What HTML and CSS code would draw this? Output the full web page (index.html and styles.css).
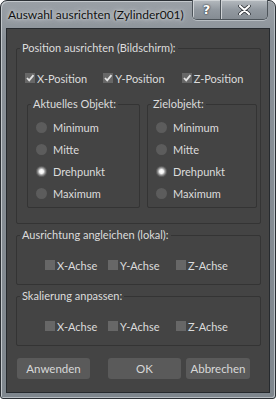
FILE: index.html
```html
<!DOCTYPE html>
<html lang="de">
<head>
    <meta charset="UTF-8">
    <title>Auswahl ausrichten</title>
    <link rel="stylesheet" href="styles.css">
</head>
<body>

    <div class="window">
        <!-- Title bar -->
        <div class="titlebar">
            <span class="title">Auswahl ausrichten (Zylinder001)</span>
            <div class="caption-buttons">
                <span class="cap-btn help">?</span>
                <span class="cap-btn close">
                    <svg width="13" height="10" viewBox="0 0 13 10"><path d="M2 1 L11 9 M11 1 L2 9" stroke="#2a2e33" stroke-width="3.6" stroke-linecap="round"/><path d="M2 1 L11 9 M11 1 L2 9" stroke="#ffffff" stroke-width="2.2" stroke-linecap="round"/></svg>
                </span>
            </div>
        </div>

        <div class="client">
            <fieldset class="group group-main">
                <legend>Position ausrichten (Bildschirm):</legend>
                <div class="check-row pos-row">
                    <label class="check"><span class="box checked"></span>X-Position</label>
                    <label class="check"><span class="box checked"></span>Y-Position</label>
                    <label class="check"><span class="box checked"></span>Z-Position</label>
                </div>
                <div class="sub-groups">
                    <fieldset class="group sub sub-left">
                        <legend>Aktuelles Objekt:</legend>
                        <div class="radio-list">
                            <div class="radio"><span class="dot"></span>Minimum</div>
                            <div class="radio"><span class="dot"></span>Mitte</div>
                            <div class="radio"><span class="dot on"></span>Drehpunkt</div>
                            <div class="radio"><span class="dot"></span>Maximum</div>
                        </div>
                    </fieldset>
                    <fieldset class="group sub sub-right">
                        <legend>Zielobjekt:</legend>
                        <div class="radio-list">
                            <div class="radio"><span class="dot"></span>Minimum</div>
                            <div class="radio"><span class="dot"></span>Mitte</div>
                            <div class="radio"><span class="dot on"></span>Drehpunkt</div>
                            <div class="radio"><span class="dot"></span>Maximum</div>
                        </div>
                    </fieldset>
                </div>
            </fieldset>

            <fieldset class="group group-axis">
                <legend>Ausrichtung angleichen (lokal):</legend>
                <div class="check-row axis-row">
                    <label class="check"><span class="box"></span>X-Achse</label>
                    <label class="check"><span class="box"></span>Y-Achse</label>
                    <label class="check"><span class="box"></span>Z-Achse</label>
                </div>
            </fieldset>

            <fieldset class="group group-axis">
                <legend>Skalierung anpassen:</legend>
                <div class="check-row axis-row">
                    <label class="check"><span class="box"></span>X-Achse</label>
                    <label class="check"><span class="box"></span>Y-Achse</label>
                    <label class="check"><span class="box"></span>Z-Achse</label>
                </div>
            </fieldset>

            <div class="buttons">
                <button class="btn btn-apply">Anwenden</button>
                <button class="btn btn-ok">OK</button>
                <button class="btn btn-cancel">Abbrechen</button>
            </div>
        </div>
    </div>

</body>
</html>
```

FILE: styles.css
```css
body {
    margin: 0;
    background: #ffffff;
    font-family: 'Lato', 'Open Sans', sans-serif;
}

/* Window frame */
.window {
    width: 276px;
    height: 399px;
    box-sizing: border-box;
    border: 1px solid #2b3035;
    border-radius: 7px 7px 3px 3px;
    padding: 0 5px 5px 5px;
    background: linear-gradient(#9aa0a6, #8a9198 40px, #7f878e);
    box-shadow: inset 1px 1px 0 #c3c8cc, inset -1px -1px 0 #b8bec3;
}

.titlebar {
    height: 27px;
    display: flex;
    align-items: flex-start;
}

.title {
    margin: 6px 0 0 2px;
    font-size: 12px;
    line-height: 16px;
    white-space: nowrap;
    color: #111;
    text-shadow: 0 0 6px #d6dadd, 0 0 3px #d6dadd;
}

.caption-buttons {
    margin-left: auto;
    margin-right: 2px;
    margin-top: -1px;
    display: flex;
    height: 19px;
    border: 1px solid #4d545a;
    border-top: none;
    border-radius: 0 0 5px 5px;
    overflow: hidden;
    box-shadow: 0 1px 0 #b8bec3;
}

.cap-btn {
    height: 19px;
    display: flex;
    align-items: center;
    justify-content: center;
    background: linear-gradient(#b5babf, #9299a0 50%, #858c93);
    box-shadow: inset 1px 1px 0 #cfd3d6;
    color: #fff;
    font-family: 'DejaVu Sans', sans-serif;
    font-weight: bold;
    font-size: 13px;
    text-shadow: 0 0 2px #2a2e33, 0 0 1px #2a2e33;
}

.help {
    width: 27px;
    border-right: 1px solid #4d545a;
}

.close {
    width: 46px;
}

/* Client area */
.client {
    height: 363px;
    border: 1px solid #262a2e;
    background: #444444;
    color: #dcdcdc;
    font-size: 11px;
    overflow: hidden;
}

.group {
    margin: 0;
    padding: 0;
    border: 1px solid #343434;
    border-radius: 2px;
    min-width: 0;
}

.group legend {
    margin-left: 3px;
    padding: 0 2px;
    line-height: 14px;
}

.group-main {
    width: 245px;
    box-sizing: border-box;
    margin: 12px 0 0 9px;
    padding: 16px 0 15px 0;
}

.check-row {
    display: flex;
    height: 14px;
    align-items: center;
}

.check {
    display: flex;
    align-items: center;
    white-space: nowrap;
}

.pos-row {
    margin-left: 8px;
}

.pos-row .check {
    width: 79px;
}

.box {
    width: 10px;
    height: 10px;
    margin-right: 2px;
    background: #676767;
}

.box.checked {
    background: #676767 url("data:image/svg+xml;utf8,<svg xmlns='http://www.w3.org/2000/svg' width='10' height='10'><path d='M2 5 L4.2 7.3 L8.5 2.2' fill='none' stroke='%23e4e4e4' stroke-width='1.8'/></svg>") no-repeat;
}

.sub-groups {
    display: flex;
    gap: 7px;
    margin: 12px 0 0 10px;
}

.sub {
    box-sizing: border-box;
    padding: 5px 0 3px 0;
}

.sub-left {
    width: 113px;
}

.sub-right {
    width: 110px;
}

.radio-list {
    padding-left: 8px;
}

.radio {
    height: 22px;
    display: flex;
    align-items: center;
}

.dot {
    width: 11px;
    height: 11px;
    border-radius: 50%;
    background: #5c5c5c;
    margin-right: 6px;
}

.dot.on {
    background: radial-gradient(circle, #ffffff 0, #f2f2f2 2px, #9a9a9a 3.5px, #5c5c5c 5px);
}

.group-axis {
    width: 245px;
    box-sizing: border-box;
    margin: 4px 0 0 9px;
    padding: 16px 0 12px 0;
}

.axis-row {
    margin-left: 28px;
}

.axis-row .check:nth-child(1) {
    width: 63px;
}

.axis-row .check:nth-child(2) {
    width: 68px;
}

/* Buttons */
.buttons {
    display: flex;
    margin: 12px 0 0 10px;
}

.btn {
    height: 21px;
    padding: 0;
    border: none;
    border-radius: 3px;
    background: #5a5a5a;
    color: #d8d8d8;
    font-family: 'Lato', 'Open Sans', sans-serif;
    font-size: 11.5px;
}

.btn-apply {
    width: 73px;
}

.btn-ok {
    width: 73px;
    margin-left: 18px;
}

.btn-cancel {
    width: 64px;
    margin-left: 5px;
}
```
